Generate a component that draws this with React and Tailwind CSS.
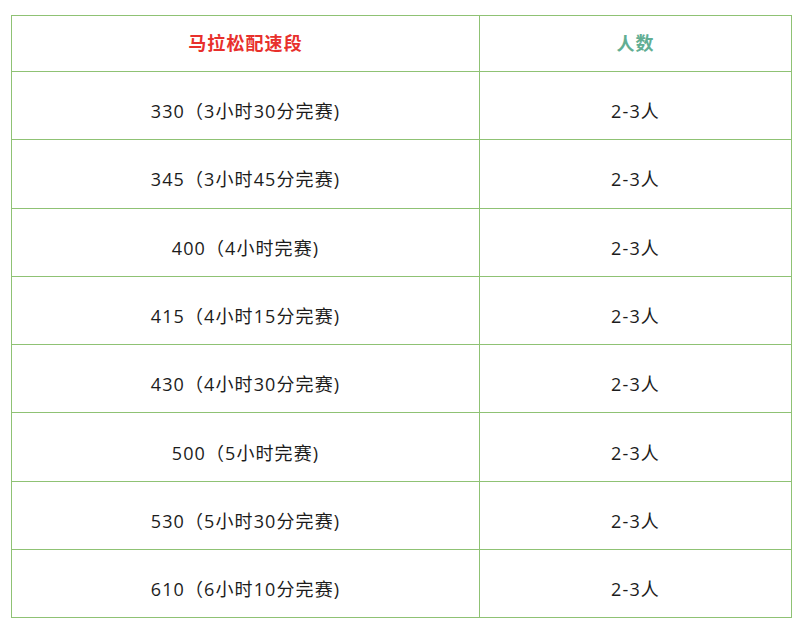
import React from 'react';

const rows = [
  '330（3小时30分完赛)',
  '345（3小时45分完赛)',
  '400（4小时完赛)',
  '415（4小时15分完赛)',
  '430（4小时30分完赛)',
  '500（5小时完赛)',
  '530（5小时30分完赛)',
  '610（6小时10分完赛)',
];

export default function App() {
  return (
    <div
      className="w-[800px] h-[625px] bg-white pt-[15px] pl-[11px]"
      style={{ fontFamily: '"Open Sans", "Noto Sans CJK SC", sans-serif' }}
    >
      <table className="w-[781px] border-collapse border border-[#8fc274] text-[18px] text-[#1c1c1c] tracking-[1.1px]">
        <thead>
          <tr className="h-[56px]">
            <th className="w-[468px] border border-[#8fc274] text-[18px] font-bold text-[#e8302c]">
              马拉松配速段
            </th>
            <th className="border border-[#8fc274] text-[18px] font-bold text-[#62ae93]">
              人数
            </th>
          </tr>
        </thead>
        <tbody>
          {rows.map((r, i) => (
            <tr key={i} className="h-[68.3px]">
              <td className="border border-[#8fc274] text-center pt-[12px]">{r}</td>
              <td className="border border-[#8fc274] text-center pt-[12px]">2-3人</td>
            </tr>
          ))}
        </tbody>
      </table>
    </div>
  );
}
